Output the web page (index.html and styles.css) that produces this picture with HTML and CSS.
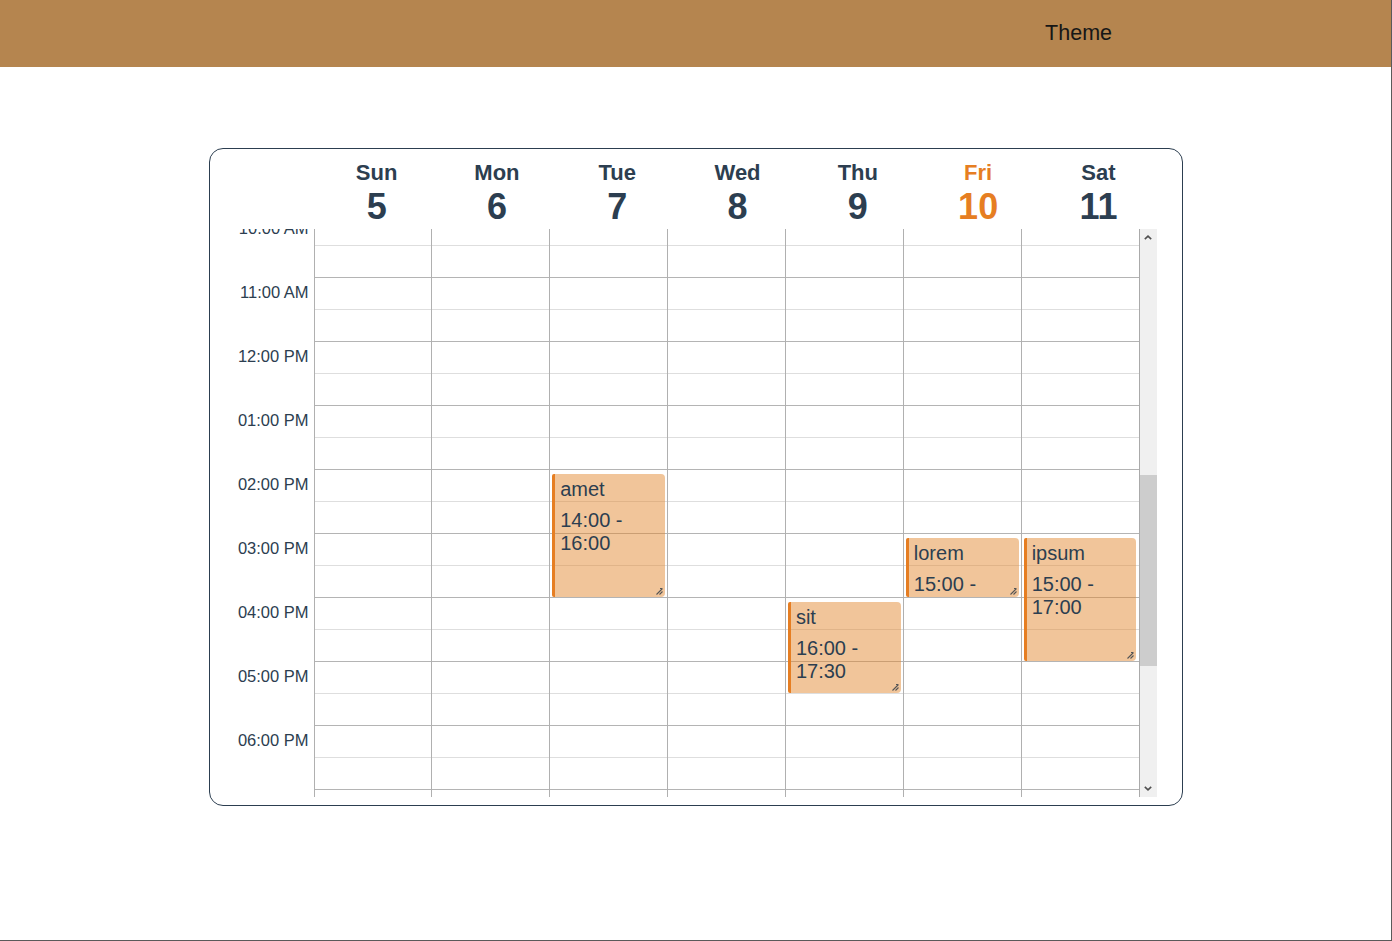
FILE: index.html
```html
<!DOCTYPE html>
<html lang="en">
<head>
<meta charset="utf-8">
<title>Calendar</title>
<link rel="stylesheet" href="styles.css">
</head>
<body>
<div class="page">
  <header class="topbar">
    <span class="theme">Theme</span>
  </header>
  <main class="main">
    <section class="card">
      <div class="head">
        <div class="hday"><div class="hname">Sun</div><div class="hnum">5</div></div>
        <div class="hday"><div class="hname">Mon</div><div class="hnum">6</div></div>
        <div class="hday"><div class="hname">Tue</div><div class="hnum">7</div></div>
        <div class="hday"><div class="hname">Wed</div><div class="hnum">8</div></div>
        <div class="hday"><div class="hname">Thu</div><div class="hnum">9</div></div>
        <div class="hday today"><div class="hname">Fri</div><div class="hnum">10</div></div>
        <div class="hday"><div class="hname">Sat</div><div class="hnum">11</div></div>
      </div>
      <div class="body">
        <div class="scroll">
          <div class="timeline">
            <div class="gutter">
              <div class="tlabel">10:00 AM</div>
              <div class="tlabel">11:00 AM</div>
              <div class="tlabel">12:00 PM</div>
              <div class="tlabel">01:00 PM</div>
              <div class="tlabel">02:00 PM</div>
              <div class="tlabel">03:00 PM</div>
              <div class="tlabel">04:00 PM</div>
              <div class="tlabel">05:00 PM</div>
              <div class="tlabel">06:00 PM</div>
              <div class="tlabel">07:00 PM</div>
            </div>
            <div class="days">
              <div class="day"></div>
              <div class="day"></div>
              <div class="day">
                <div class="event" style="top:261px;height:123px">
                  <div class="etitle">amet</div>
                  <div class="etime">14:00 - 16:00</div>
                  <svg class="grip" viewBox="0 0 8 8" width="8" height="8"><path d="M7.5 1.5 L1.5 7.5 M7.5 4.5 L4.5 7.5 M5 1.5 L7.5 1.5" stroke="#555" stroke-width="1.1" fill="none"/></svg>
                </div>
              </div>
              <div class="day"></div>
              <div class="day">
                <div class="event" style="top:389px;height:91px">
                  <div class="etitle">sit</div>
                  <div class="etime">16:00 - 17:30</div>
                  <svg class="grip" viewBox="0 0 8 8" width="8" height="8"><path d="M7.5 1.5 L1.5 7.5 M7.5 4.5 L4.5 7.5 M5 1.5 L7.5 1.5" stroke="#555" stroke-width="1.1" fill="none"/></svg>
                </div>
              </div>
              <div class="day">
                <div class="event" style="top:325px;height:59px">
                  <div class="etitle">lorem</div>
                  <div class="etime">15:00 - 16:00</div>
                  <svg class="grip" viewBox="0 0 8 8" width="8" height="8"><path d="M7.5 1.5 L1.5 7.5 M7.5 4.5 L4.5 7.5 M5 1.5 L7.5 1.5" stroke="#555" stroke-width="1.1" fill="none"/></svg>
                </div>
              </div>
              <div class="day">
                <div class="event" style="top:325px;height:123px">
                  <div class="etitle">ipsum</div>
                  <div class="etime">15:00 - 17:00</div>
                  <svg class="grip" viewBox="0 0 8 8" width="8" height="8"><path d="M7.5 1.5 L1.5 7.5 M7.5 4.5 L4.5 7.5 M5 1.5 L7.5 1.5" stroke="#555" stroke-width="1.1" fill="none"/></svg>
                </div>
              </div>
            </div>
          </div>
        </div>
        <div class="scrollbar">
          <div class="sbtn"><svg viewBox="0 0 8 5" width="8" height="5"><path d="M0.8 4.2 L4 1.2 L7.2 4.2" stroke="#505050" stroke-width="1.6" fill="none"/></svg></div>
          <div class="track"><div class="thumb"></div></div>
          <div class="sbtn"><svg viewBox="0 0 8 5" width="8" height="5"><path d="M0.8 0.8 L4 3.8 L7.2 0.8" stroke="#505050" stroke-width="1.6" fill="none"/></svg></div>
        </div>
      </div>
    </section>
  </main>
</div>
</body>
</html>
```

FILE: styles.css
```css
* { box-sizing: border-box; }
html, body { margin: 0; padding: 0; background: #fff; }
body { font-family: "Liberation Sans", Arial, sans-serif; color: #2c3e50; }

.page {
  width: 1392px;
  height: 941px;
  border-right: 1px solid #5a5a5a;
  border-bottom: 1px solid #5a5a5a;
}

.topbar {
  height: 67px;
  background: #b5854f;
  display: flex;
  align-items: center;
  justify-content: flex-end;
  padding-right: 279px;
}
.theme {
  font-size: 21.5px;
  color: #161616;
}

.main { padding-top: 81px; }

.card {
  width: 974px;
  height: 658px;
  margin: 0 auto;
  border: 1px solid #2c3e50;
  border-radius: 14px;
  padding: 0 25px 8px 0;
  display: flex;
  flex-direction: column;
}

.head {
  height: 80px;
  display: flex;
  padding-left: 107px;
  padding-top: 11px;
}
.hday {
  width: 120.3px;
  flex: none;
  text-align: center;
  font-weight: bold;
  color: #2c3e50;
}
.hname { font-size: 22px; line-height: 25px; }
.hnum { font-size: 36px; line-height: 41px; margin-top: 1px; }
.hday.today { color: #e67e22; }

.body {
  height: 568px;
  display: flex;
}
.scroll {
  flex: 1;
  overflow: hidden;
}
.timeline {
  display: flex;
  margin-top: -16px;
}
.gutter { width: 104px; }
.tlabel {
  height: 64px;
  padding: 6px 5px 0 0;
  text-align: right;
  font-size: 16.5px;
  line-height: 19px;
  color: #2c3e50;
}

.days {
  flex: 1;
  display: grid;
  grid-template-columns: repeat(7, 1fr);
  border-right: 1px solid #aaa;
  background: repeating-linear-gradient(to bottom,
    #b4b4b4 0, #b4b4b4 1px,
    transparent 1px, transparent 32px,
    #dedede 32px, #dedede 33px,
    transparent 33px, transparent 64px);
  height: 640px;
}
.day {
  position: relative;
  border-left: 1px solid #b0b0b0;
}

.event {
  position: absolute;
  left: 2px;
  right: 2px;
  background: rgba(226, 134, 44, 0.48);
  border-left: 3px solid #e67e22;
  border-radius: 2px 4px 4px 2px;
  padding: 4px 5px 0 5px;
  font-size: 20px;
  line-height: 23px;
  color: #2c3e50;
  overflow: hidden;
}
.etitle { margin-bottom: 8px; }
.grip {
  position: absolute;
  right: 2px;
  bottom: 2px;
}

.scrollbar {
  width: 17px;
  background: #f0f0f0;
  display: flex;
  flex-direction: column;
}
.sbtn {
  height: 17px;
  display: flex;
  align-items: center;
  justify-content: center;
}
.track { flex: 1; }
.thumb {
  margin-top: 229px;
  height: 191px;
  background: #cdcdcd;
}
```
